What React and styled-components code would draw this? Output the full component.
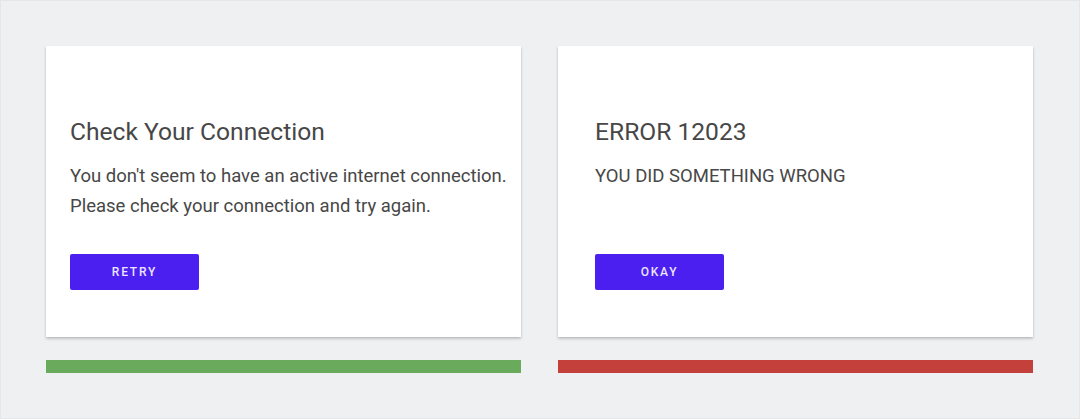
import React from "react";
import styled, { createGlobalStyle } from "styled-components";

const GlobalStyle = createGlobalStyle`
  html, body {
    margin: 0;
    padding: 0;
    background: #eff0f2;
  }
  body {
    font-family: Roboto, "Liberation Sans", Arial, sans-serif;
    -webkit-font-smoothing: antialiased;
  }
`;

const Page = styled.div`
  box-sizing: border-box;
  width: 1080px;
  height: 419px;
  padding: 46px 47px 0 46px;
  background: #eff0f2;
  box-shadow: inset 0 0 0 1px #e5e6e9;
  display: grid;
  grid-template-columns: 475px 475px;
  grid-template-rows: auto 13px;
  column-gap: 37px;
  row-gap: 23px;
  align-content: start;
`;

const Card = styled.div`
  background: #fff;
  padding: 70px 12px 47px ${(p) => p.$inset || 24}px;
  display: flex;
  flex-direction: column;
  align-items: flex-start;
  box-shadow: 0 1px 2px rgba(0, 0, 0, 0.12), 0 2px 3px rgba(0, 0, 0, 0.14);
`;

const Title = styled.h2`
  margin: 0;
  font-size: 24.6px;
  line-height: 32px;
  font-weight: 400;
  color: #474747;
  white-space: nowrap;
`;

const Body = styled.p`
  margin: 13px 0 33px;
  font-size: 18.5px;
  line-height: 30px;
  font-weight: 400;
  color: #474747;
  white-space: nowrap;
`;

const Button = styled.button`
  margin-top: auto;
  width: 129px;
  height: 36px;
  border: none;
  border-radius: 2px;
  background: #4b1ff0;
  color: #ece6ff;
  font-family: Roboto, "Liberation Sans", Arial, sans-serif;
  font-size: 12px;
  font-weight: 500;
  letter-spacing: 1.8px;
  text-transform: uppercase;
  cursor: pointer;
`;

const Bar = styled.div`
  height: 13px;
  background: ${(p) => p.$color};
`;

const cards = [
  {
    title: "Check Your Connection",
    body: (
      <>
        You don't seem to have an active internet connection.
        <br />
        Please check your connection and try again.
      </>
    ),
    action: "Retry",
    inset: 24,
    color: "#69aa5d",
  },
  {
    title: "ERROR 12023",
    body: "YOU DID SOMETHING WRONG",
    action: "Okay",
    inset: 37,
    color: "#c4403b",
  },
];

export default function App() {
  return (
    <>
      <GlobalStyle />
      <Page>
        {cards.map((c) => (
          <Card key={c.title} $inset={c.inset}>
            <Title>{c.title}</Title>
            <Body>{c.body}</Body>
            <Button>{c.action}</Button>
          </Card>
        ))}
        {cards.map((c) => (
          <Bar key={c.title + "-bar"} $color={c.color} />
        ))}
      </Page>
    </>
  );
}
